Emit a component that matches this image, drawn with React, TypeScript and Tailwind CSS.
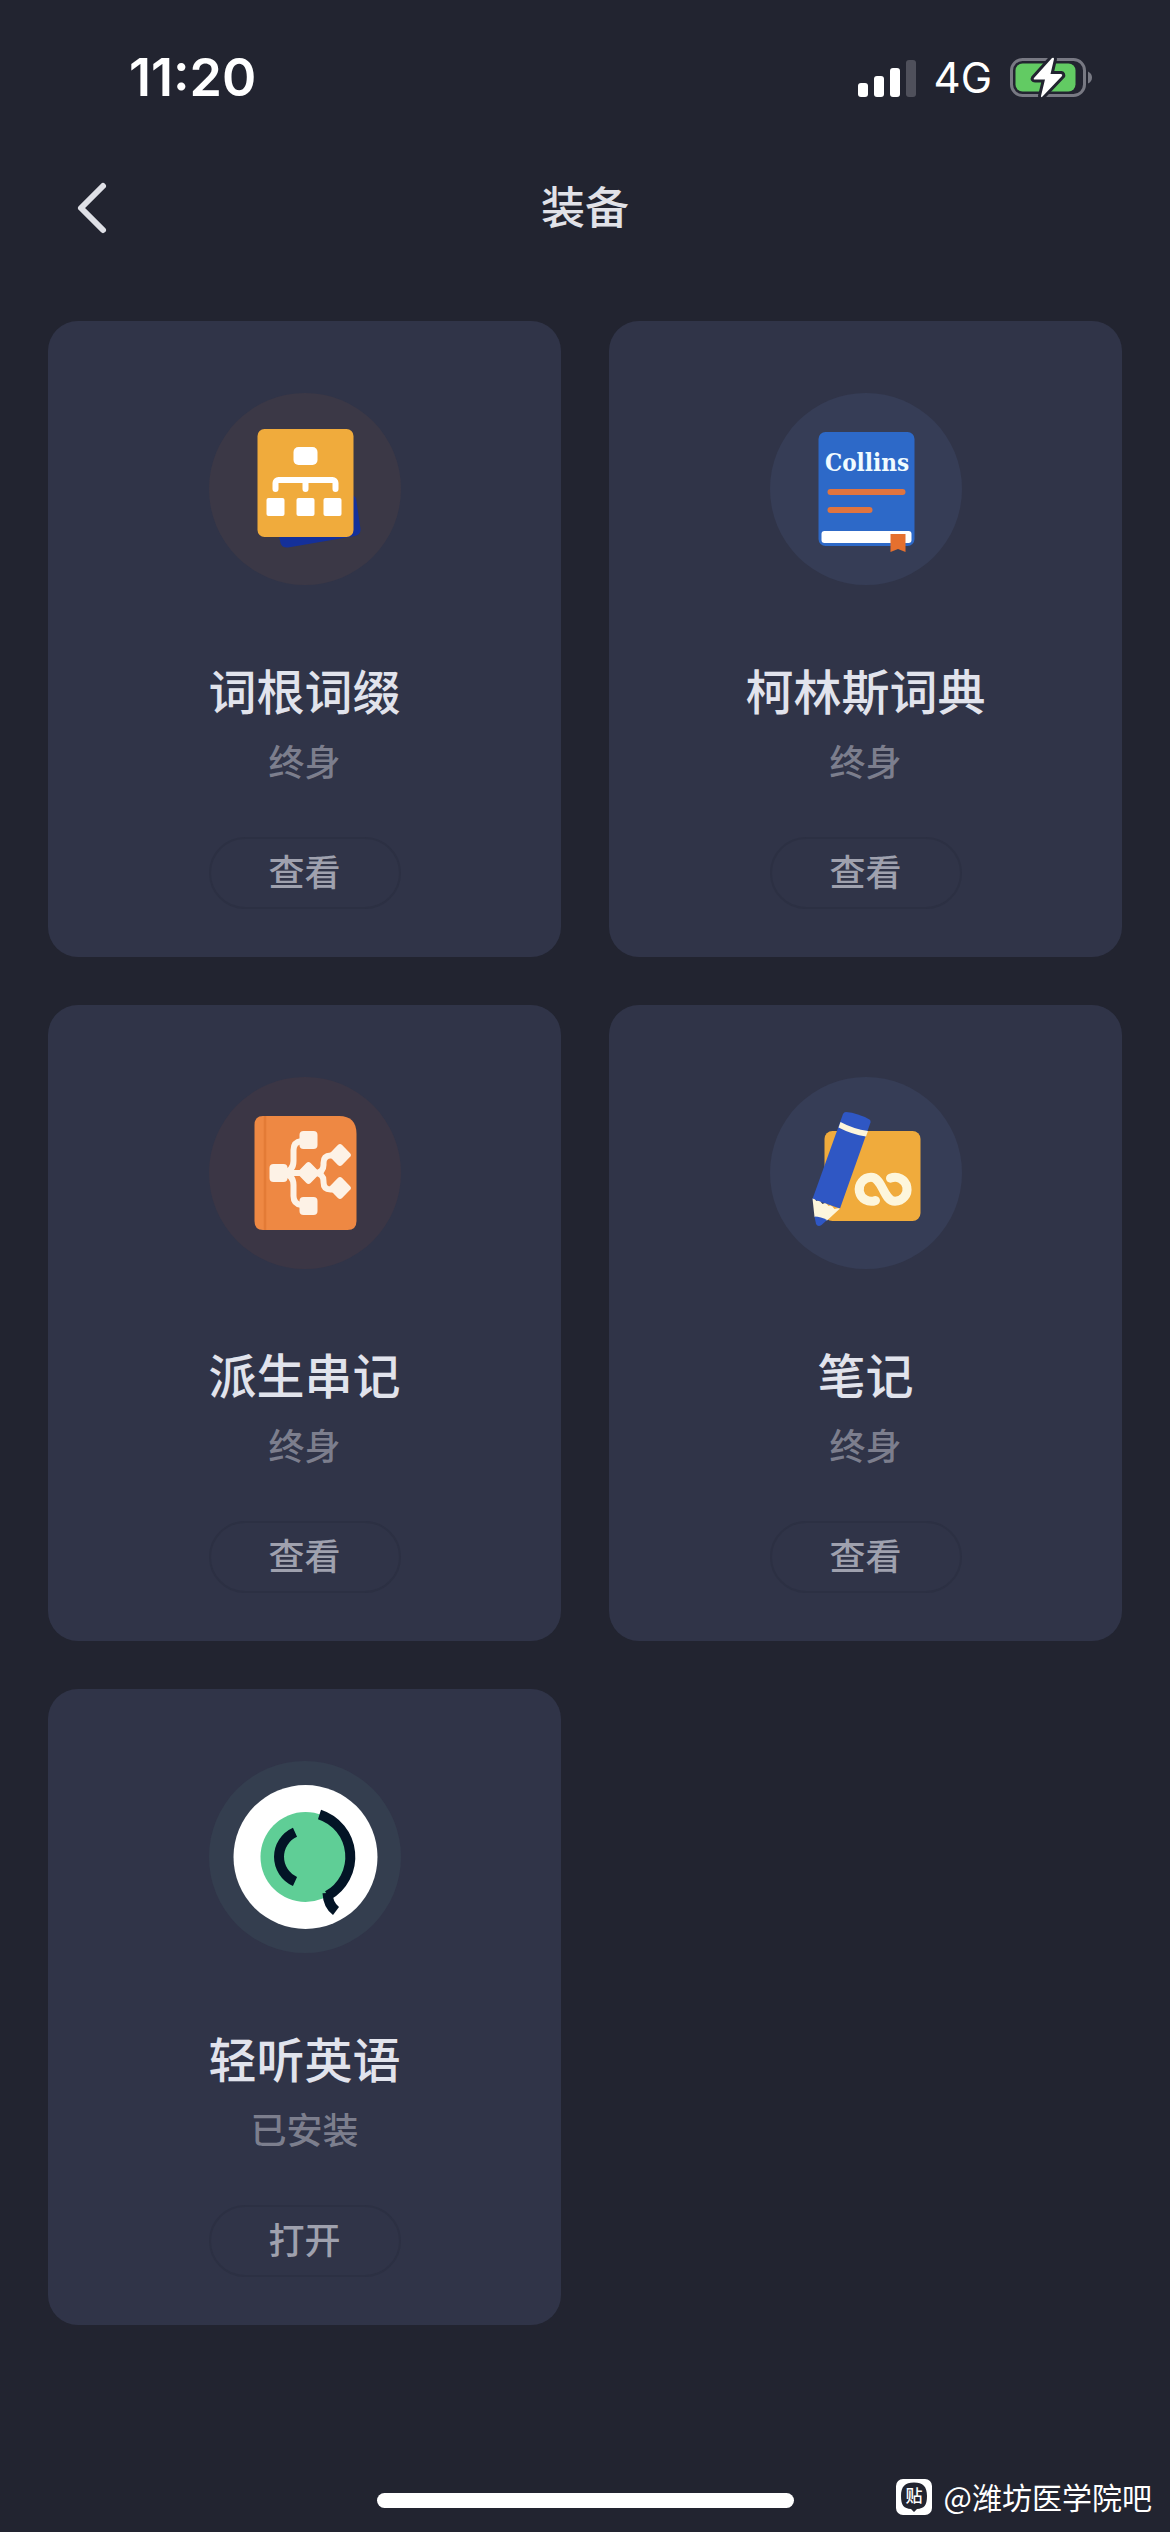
import type { ReactNode } from "react";

interface Gear {
  name: string;
  status: string;
  action: string;
  halo: string;
  icon: ReactNode;
}

function RootsIcon() {
  return (
    <svg viewBox="0 0 192 192" className="size-full" aria-hidden="true">
      <path d="M70 143l1.500 7q1.500 5 7.500 4.500L146 143q6-1.500 5.500-7L147 105l-5-5z" fill="#14309a" />
      <rect x="48.500" y="36" width="96" height="108" rx="7" fill="#f0ab3c" />
      <rect x="84.500" y="54" width="24" height="18" rx="5" fill="#fff" />
      <path d="M66.500 96v-6a3 3 0 0 1 3-3h54a3 3 0 0 1 3 3v6M96.500 88v8" fill="none" stroke="#fff" strokeWidth="6" strokeLinecap="round" />
      <g fill="#fff">
        <rect x="57.500" y="105" width="18" height="18" rx="2" />
        <rect x="87.500" y="105" width="18" height="18" rx="2" />
        <rect x="114.500" y="105" width="18" height="18" rx="2" />
      </g>
    </svg>
  );
}

function CollinsIcon() {
  return (
    <svg viewBox="0 0 192 192" className="size-full" aria-hidden="true">
      <rect x="48.500" y="39" width="96" height="114" rx="7" fill="#2d69c8" />
      <text x="97" y="78" textAnchor="middle" fill="#f0fbff" className="font-['DejaVu_Serif_Condensed','DejaVu_Serif',serif] text-[24px] font-bold">
        Collins
      </text>
      <rect x="57.500" y="96" width="78" height="6" rx="3" fill="#e0743f" />
      <rect x="57.500" y="114" width="45" height="6" rx="3" fill="#e0743f" />
      <rect x="51.500" y="138" width="90" height="12" rx="3" fill="#fff" />
      <path d="M120.500 141h15v18l-7.500-3-7.500 3z" fill="#e5702e" />
    </svg>
  );
}

function DerivativesIcon() {
  return (
    <svg viewBox="0 0 192 192" className="size-full" aria-hidden="true">
      <path d="M54 39h76q17.500 0 17.500 18v87q0 9-9 9H54q-8.500 0-8.500-9V48q0-9 8.500-9z" fill="#ee8843" />
      <path d="M56 39v114" stroke="#e37b36" strokeWidth="2.500" />
      <g fill="none" stroke="#fdf2e6" strokeWidth="6">
        <path d="M74 96q10.500-2 10.500-12V73q0-8 8-9" />
        <path d="M74 96q10.500 2 10.500 12v11q0 8 8 9" />
        <path d="M76 96h32" />
        <path d="M107 96q7.500-1 7.500-8v-2q0-7.500 7-7.500h6" />
        <path d="M107 96q7.500 1 7.500 8v1q0 7.500 7 7.500h6" />
      </g>
      <g fill="#fdf2e6">
        <rect x="60.500" y="87" width="18" height="18" rx="4" />
        <rect x="90.500" y="54" width="18" height="18" rx="4" />
        <rect x="90.500" y="120" width="18" height="18" rx="4" />
        <rect x="91" y="87.500" width="17" height="17" rx="3" transform="rotate(45 99.500 96)" />
        <rect x="122.500" y="69.500" width="17" height="17" rx="3" transform="rotate(45 131 78)" />
        <rect x="122.500" y="102.500" width="17" height="17" rx="3" transform="rotate(45 131 111)" />
      </g>
    </svg>
  );
}

function NotesIcon() {
  return (
    <svg viewBox="0 0 192 192" className="size-full" aria-hidden="true">
      <rect x="54.500" y="54" width="96" height="90" rx="8" fill="#f0ab3c" />
      <path
        d="M120.500 101.200A12 12 0 1 1 125 124.300C113 124.300 113 100.300 101 100.300A12 12 0 1 0 105.500 123.500"
        fill="none"
        stroke="#fdf6dc"
        strokeWidth="9"
        strokeLinecap="round"
      />
      <path d="M76 35q12 1 23.500 7.500 1.500 1 1 3L70 131.500 42.500 122 73 37q1-2 3-2z" fill="#2f57c4" />
      <path d="M70.500 45q13 7 27.500 9l-2 5.500q-14-2-27.500-9z" fill="#fdf6dc" />
      <path d="M42.500 121.500q2.500 0 4 2.500 3.500-1 6 3 3.500-2 6 2 3-2 6 3 3-1 5.500-.5L57 143.500l-12.500-3.500z" fill="#fdf6dc" />
      <path d="M44.500 139.500q6.500 0 12.500 3.500l-5.500 5q-3.500 2.500-5.500-1z" fill="#2f57c4" />
    </svg>
  );
}

function ListenIcon() {
  return (
    <svg viewBox="0 0 192 192" className="size-full" aria-hidden="true">
      <circle cx="96.500" cy="96" r="72" fill="#fff" />
      <circle cx="96.500" cy="96" r="45" fill="#5fce96" />
      <g fill="none" stroke="#031426" strokeWidth="10">
        <path d="M110.500 53.500A44.500 44.500 0 0 1 118.500 134.700" />
        <path d="M118.500 132Q119 144 127 150" />
        <path d="M86 71.200A27 27 0 0 0 86 120.500" />
      </g>
    </svg>
  );
}

const GEAR: Gear[] = [
  { name: "词根词缀", status: "终身", action: "查看", halo: "bg-[#3b3846]", icon: <RootsIcon /> },
  { name: "柯林斯词典", status: "终身", action: "查看", halo: "bg-[#363d56]", icon: <CollinsIcon /> },
  { name: "派生串记", status: "终身", action: "查看", halo: "bg-[#3b3645]", icon: <DerivativesIcon /> },
  { name: "笔记", status: "终身", action: "查看", halo: "bg-[#363d56]", icon: <NotesIcon /> },
  { name: "轻听英语", status: "已安装", action: "打开", halo: "bg-[#343e4f]", icon: <ListenIcon /> },
];

function StatusBar() {
  return (
    <div className="flex h-[156px] items-center justify-between pr-[78px] pl-[129px] font-['Inter',sans-serif] text-white">
      <span className="text-[52px] leading-none font-semibold">11:20</span>
      <div className="flex items-center gap-[18px]">
        <svg viewBox="0 0 58 37" className="h-[37px] w-[58px]" fill="#fff" aria-hidden="true">
          <rect x="0" y="23" width="10" height="14" rx="3" />
          <rect x="16" y="16" width="10" height="21" rx="3" />
          <rect x="32" y="8" width="10" height="29" rx="3" />
          <rect x="48" y="0" width="10" height="37" rx="3" fill="#4f505b" />
        </svg>
        <span className="text-[42px] leading-none">4G</span>
        <svg viewBox="0 0 82 40" className="h-10 w-[82px] overflow-visible" aria-hidden="true">
          <rect x="1.500" y="1.500" width="73" height="36" rx="11" fill="none" stroke="#787983" strokeWidth="3" />
          <path d="M78 13.500q4 2 4 6t-4 6z" fill="#787983" />
          <rect x="5.500" y="5.500" width="60" height="28" rx="7" fill="#62cb63" />
          <path
            d="M42 0L24 20q-1 1.500 1 1.500h10L31 38q0 2 1.500 .5L52 18q1-1.500-1-2H40.500L44 1q0-2-2-1z"
            fill="#fff"
            stroke="#222430"
            strokeWidth="6"
            strokeLinejoin="round"
            paintOrder="stroke"
          />
        </svg>
      </div>
    </div>
  );
}

function NavBar() {
  return (
    <header className="grid h-[104px] grid-cols-[1fr_auto_1fr] items-center px-[72px]">
      <button type="button" aria-label="返回" className="flex h-[60px] w-10 items-center justify-center">
        <svg viewBox="0 0 40 60" className="h-[60px] w-10" fill="none" aria-hidden="true">
          <path d="M31 8L9 30l22 22" stroke="#dfe0e6" strokeWidth="6" strokeLinecap="round" strokeLinejoin="round" />
        </svg>
      </button>
      <h1 className="pb-1.5 text-[44px] leading-[60px] font-medium text-[#e1e2e8]">装备</h1>
    </header>
  );
}

function GearCard({ name, status, action, halo, icon }: Gear) {
  return (
    <li className="flex flex-col items-center rounded-[30px] bg-[#303448] pt-[72px] pb-12">
      <div className={`size-48 rounded-full ${halo}`}>{icon}</div>
      <h2 className="mt-[68px] text-[48px] leading-[72px] font-medium text-[#e1e3ec]">{name}</h2>
      <p className="mt-2 text-[36px] leading-[54px] font-medium text-[#7c7e8d]">{status}</p>
      <button type="button" className="mt-[50px] h-[72px] w-48 rounded-full border-2 border-[#2c3043] pb-1.5 text-[36px] leading-[54px] font-medium text-[#9fa1ae]">
        {action}
      </button>
    </li>
  );
}

function Watermark() {
  return (
    <div className="absolute right-[18px] bottom-3 flex items-center gap-3 text-white">
      <svg viewBox="0 0 36 36" className="size-9" aria-hidden="true">
        <rect x="0" y="0" width="36" height="36" rx="7" fill="#fff" />
        <path d="M18 3.500c9 0 13 4 13 13.500s-3 12.500-10 13l-3 3-3-3C8 29.500 5 26.500 5 17S9 3.500 18 3.500z" fill="#222430" />
        <text x="18" y="23" textAnchor="middle" fill="#fff" className="text-[17px] font-medium">
          贴
        </text>
      </svg>
      <span className="pb-0.5 text-[30px] leading-[44px]">@潍坊医学院吧</span>
    </div>
  );
}

export default function App() {
  return (
    <div className="flex min-h-screen flex-col bg-[#222430] font-['Noto_Sans_CJK_SC',sans-serif]">
      <StatusBar />
      <NavBar />
      <main className="px-12 pt-[61px] pb-12">
        <ul className="grid grid-cols-2 gap-12">
          {GEAR.map((gear) => (
            <GearCard key={gear.name} {...gear} />
          ))}
        </ul>
      </main>
      <footer className="relative mt-auto flex justify-center pb-6">
        <div className="h-[15px] w-[417px] rounded-full bg-white" />
        <Watermark />
      </footer>
    </div>
  );
}
